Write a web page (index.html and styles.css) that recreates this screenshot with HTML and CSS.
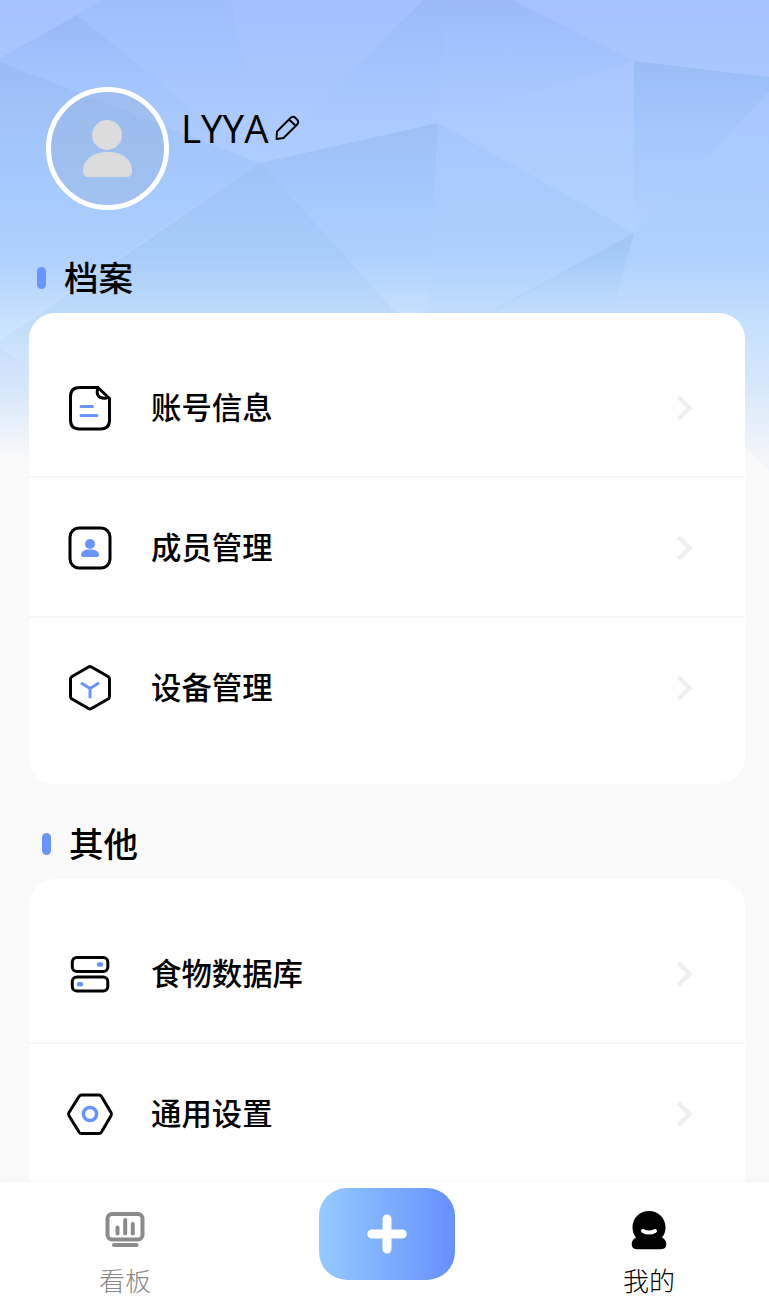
FILE: index.html
```html
<!DOCTYPE html>
<html lang="zh-CN">
<head>
<meta charset="utf-8">
<title>我的</title>
<link rel="stylesheet" href="styles.css">
</head>
<body>
<div class="screen">
  <svg class="backdrop" width="769" height="470" viewBox="0 0 769 470" aria-hidden="true">
    <defs>
      <linearGradient id="sky" x1="0" y1="0" x2="0" y2="1">
        <stop offset="0" stop-color="#a6c1ff"/><stop offset=".12" stop-color="#a9c6ff"/><stop offset=".25" stop-color="#adcbff"/><stop offset=".54" stop-color="#b2d3ff"/><stop offset=".67" stop-color="#c8e1fe"/><stop offset=".82" stop-color="#dcebfb"/><stop offset=".98" stop-color="#fafafa"/>
      </linearGradient>
      <linearGradient id="down" x1="0" y1="0" x2="0" y2="1">
        <stop offset="0" stop-color="#78a4dc" stop-opacity=".32"/><stop offset=".45" stop-color="#80b4f4" stop-opacity=".19"/><stop offset="1" stop-color="#80b8f0" stop-opacity="0"/>
      </linearGradient>
      <linearGradient id="deep" x1="0" y1="0" x2="0" y2="1">
        <stop offset="0" stop-color="#78a8df" stop-opacity=".3"/><stop offset="1" stop-color="#80b8e8" stop-opacity=".06"/>
      </linearGradient>
      <linearGradient id="soft" x1="0" y1="0" x2="0" y2="1">
        <stop offset="0" stop-color="#80b0f0" stop-opacity=".17"/><stop offset="1" stop-color="#80b8f0" stop-opacity=".08"/>
      </linearGradient>
      <linearGradient id="top" x1="0" y1="0" x2="0" y2="1">
        <stop offset="0" stop-color="#80b0e8" stop-opacity=".22"/><stop offset=".5" stop-color="#88b8f8" stop-opacity=".1"/><stop offset=".8" stop-color="#88b8f8" stop-opacity="0"/>
      </linearGradient>
    </defs>
    <path fill="url(#sky)" d="M0 0h769v470H0z"/>
    <path fill="url(#down)" d="M77 15 0 58V62L260 163z"/>
    <path fill="url(#top)" d="M101 0H231L260 163 77 15z"/>
    <path fill="url(#soft)" opacity=".4" d="M231 0H423L260 163z"/>
    <path fill="url(#down)" opacity=".8" d="M423 0H447L438 123 260 163z"/>
    <path fill="url(#down)" opacity=".75" d="M447 0H512L634 61 438 123z"/>
    <path fill="url(#down)" d="M0 62 260 163 0 337z"/>
    <path fill="url(#deep)" d="M260 163 0 341V345L28 365H443z"/>
    <path fill="url(#down)" d="M438 123 260 163 400 320H428z"/>
    <path fill="url(#soft)" d="M438 123 634 233 480 320H428z"/>
    <path fill="url(#down)" d="M634 61 769 77V92L634 233z"/>
    <path fill="url(#soft)" opacity=".6" d="M769 92 634 233 610 320 769 470z"/>
    <path fill="url(#deep)" d="M634 233 475 320H610z"/>
    <path fill="url(#down)" opacity=".35" d="M0 347 40 373V460H0z"/>
  </svg>

  <main class="content">
    <header class="profile">
      <div class="avatar">
        <svg width="50" height="58" viewBox="0 0 50 58" fill="#dcdcdc"><circle cx="24" cy="15" r="15"/><path d="M25 32C39 32 49 39 49 51c0 4-1.500 6-7 6H7c-5.500 0-7-2-7-6C0 39 11 32 25 32z"/></svg>
      </div>
      <div class="name">LYYA</div>
      <svg class="pencil" width="25" height="26" viewBox="0 0 25 26" fill="none" stroke="#000" stroke-width="1.900" stroke-linejoin="round"><path d="M2 16.500 15 3.500c2-2 4-2 5.500-.5l1.500 1.500c1.700 1.700 1.700 3.500-.3 5.500L8.500 23 1.500 24zM14 4.500l7 6.500"/></svg>
    </header>

    <h2 class="title"><i class="mark"></i><span>档案</span></h2>
    <section class="card">
      <div class="row">
        <svg class="icon" viewBox="0 0 48 48"><path d="M13 3.500H32L43.500 14.500V36q0 9-9 9H13.500q-9 0-9-9V12.500q0-9 9-9zM32 3.500c-2.500 7.500 1 11.500 8.500 10.500"/><path class="accent" d="M15 22.500H26.500M15 31.500H31"/></svg>
        <span class="label">账号信息</span><svg class="chevron" viewBox="0 0 18 28"><path d="M2.500 3 13.500 14 2.500 25"/></svg>
      </div>
      <div class="row">
        <svg class="icon" viewBox="0 0 48 48"><rect x="4" y="4" width="40" height="40" rx="9"/><g class="solid"><circle cx="24" cy="20" r="5"/><path d="M24 25.500c6 0 9 2 9 5.500q0 2-2 2H17q-2 0-2-2c0-3.500 3-5.500 9-5.500z"/></g></svg>
        <span class="label">成员管理</span><svg class="chevron" viewBox="0 0 18 28"><path d="M2.500 3 13.500 14 2.500 25"/></svg>
      </div>
      <div class="row">
        <svg class="icon" viewBox="0 0 48 48"><path d="M22.500 3q1.500-1 3 0L42 12.500q1.500 1 1.500 2.500V32.500q0 1.500-1.500 2.500L25.500 44.500q-1.500 1-3 0L6 35Q4.500 34 4.500 32.500V15Q4.500 13.500 6 12.500z"/><path class="accent" d="M16 19.500 24 24.500 32 19.500M24 24.500V33"/></svg>
        <span class="label">设备管理</span><svg class="chevron" viewBox="0 0 18 28"><path d="M2.500 3 13.500 14 2.500 25"/></svg>
      </div>
    </section>

    <h2 class="title shifted"><i class="mark"></i><span>其他</span></h2>
    <section class="card">
      <div class="row">
        <svg class="icon" viewBox="0 0 48 48"><rect x="6.300" y="7.500" width="35.500" height="14" rx="4.500"/><rect x="6.300" y="27" width="35.500" height="14" rx="4.500"/><path class="accent dot" d="M33 14.500h2M13 34.200h2"/></svg>
        <span class="label">食物数据库</span><svg class="chevron" viewBox="0 0 18 28"><path d="M2.500 3 13.500 14 2.500 25"/></svg>
      </div>
      <div class="row">
        <svg class="icon" viewBox="0 0 48 48"><path d="M15.500 5H33q1.500 0 2.500 1.500L45 22.500q1 1.700 0 3.300L35.500 42q-1 1.500-2.500 1.500H15.500Q14 43.500 13 42L3 25.800q-1-1.600 0-3.300L13 6.500Q14 5 15.500 5z"/><circle class="accent ring" cx="24" cy="24" r="6.600"/></svg>
        <span class="label">通用设置</span><svg class="chevron" viewBox="0 0 18 28"><path d="M2.500 3 13.500 14 2.500 25"/></svg>
      </div>
    </section>
  </main>

  <nav class="tabs">
    <div class="tab">
      <svg width="48" height="48" viewBox="0 0 48 48" fill="none" stroke="#8b8b8b" stroke-width="4" stroke-linecap="round"><rect x="6.500" y="8" width="35" height="25.500" rx="4.500"/><path d="M13 39H35.500M16.500 21.500V27.500M24.200 14V27.500M31.800 18V27.500"/></svg>
      <span>看板</span>
    </div>
    <div class="add"><svg width="40" height="40" viewBox="0 0 40 40" fill="none" stroke="#fff" stroke-width="9" stroke-linecap="round"><path d="M20 5V35M4.800 20H35.200"/></svg></div>
    <div class="tab active">
      <svg width="48" height="48" viewBox="0 0 48 48"><path d="M24 5C14.500 5 7.500 12 7.500 21.500q0 6 3.500 10Q6.700 34 6.700 38q0 5.200 5 5.200H36.300q5 0 5-5.200 0-4-4.300-6.500 3.500-4 3.500-10C40.500 12 33.500 5 24 5z"/><path d="M18 25q6 3.200 12 0" fill="none" stroke="#fff" stroke-width="4" stroke-linecap="round"/></svg>
      <span>我的</span>
    </div>
  </nav>
</div>
</body>
</html>
```
FILE: styles.css
```css
* { box-sizing: border-box; }
body { margin: 0; background: #fafafa; color: #000; font-family: "Noto Sans CJK SC", sans-serif; }
.screen { height: 1314px; overflow: hidden; display: flex; flex-direction: column; position: relative; }
.backdrop { position: absolute; left: 0; top: 0; }
.content { position: relative; flex: 1; min-height: 0; overflow: hidden; padding: 87px 24px 0 29px; }
.profile { display: flex; align-items: flex-start; height: 158px; padding-left: 17px; }
.avatar { width: 123px; height: 123px; border: 5px solid #fff; border-radius: 50%; background: rgba(145, 175, 215, .32); display: flex; justify-content: center; padding-top: 28px; }
.name { width: 88px; font-family: "Open Sans", "Noto Sans", sans-serif; font-size: 38.500px; line-height: 56px; font-weight: 400; margin: 13px 0 0 12px; }
.pencil { margin: 28px 0 0 6px; }
.title { display: flex; align-items: center; gap: 18px; height: 68px; margin: 0; padding: 0 0 2px 8px; font-size: 34.500px; font-weight: 500; line-height: 50px; }
.title span { padding-bottom: 5px; }
.mark { width: 9px; height: 22px; border-radius: 4.500px; background: #6894ff; }
.title.shifted { padding-left: 13px; margin-top: 27px; }
.card { background: #fff; border-radius: 26px; padding: 25px 0 26px; }
.row { height: 140px; display: flex; align-items: center; padding: 2px 51px 0 37px; border-bottom: 2px solid #f8f8f8; }
.row:last-child { border-bottom-color: transparent; }
.icon { width: 48px; height: 48px; fill: none; stroke: #000; stroke-width: 3; stroke-linejoin: round; stroke-linecap: round; }
.accent { stroke: #6894ff; }
.dot { stroke-width: 4.500; }
.ring { stroke-width: 3.500; }
.solid { fill: #6894ff; stroke: none; }
.label { flex: 1; margin-left: 37px; padding-bottom: 4px; font-size: 30.400px; font-weight: 500; line-height: 44px; }
.chevron { width: 18px; height: 28px; fill: none; stroke: #eee; stroke-width: 4.500; }
.tabs { position: relative; height: 132px; background: #fff; display: flex; justify-content: space-between; align-items: flex-start; padding: 6px 70px 0 75px; box-shadow: 0 -1px 8px rgba(0, 0, 0, .04); }
.tab { width: 100px; display: flex; flex-direction: column; align-items: center; padding-top: 18px; color: #888; font-size: 26px; font-weight: 300; line-height: 38px; gap: 7px; }
.tab.active { color: #000; }
.add { width: 136px; height: 92px; border-radius: 28px; background: linear-gradient(90deg, #94caff, #6690ff); display: flex; align-items: center; justify-content: center; }
```
